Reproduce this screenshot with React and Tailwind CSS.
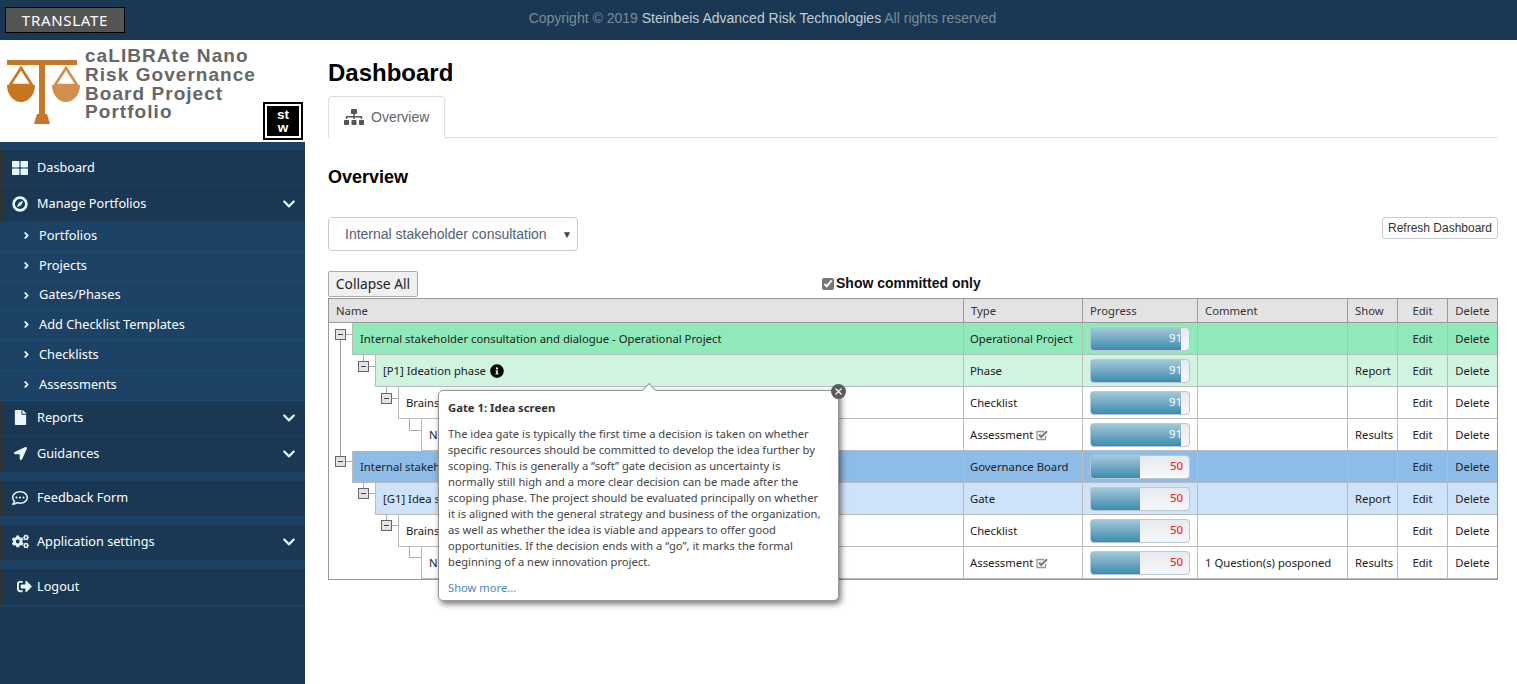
import React from "react";
import { FaThLarge, FaFile, FaLocationArrow, FaRegCommentDots, FaCogs, FaSignOutAlt, FaChevronDown, FaAngleRight, FaSitemap, FaInfoCircle } from "react-icons/fa";

const seg = "font-['Noto_Sans',sans-serif]";
const ari = "font-['Liberation_Sans',Arial,sans-serif]";

function Compass() {
  return (
    <svg width="16" height="16" viewBox="0 0 16 16">
      <circle cx="8" cy="8" r="6.4" fill="none" stroke="#e8f6ff" strokeWidth="2.6" />
      <path d="M11.200 4.800 L9.200 9.200 L4.800 11.200 L6.800 6.800 Z" fill="#e8f6ff" />
    </svg>
  );
}

function NavItem({ icon, label, chev, low }) {
  return (
    <div className={`h-[36px] bg-[#1a3853] border-l-[3px] border-l-[#2f3336] border-b border-b-[#1c4060] flex items-center text-white text-[12.7px] ${low ? "pt-[1px]" : "pb-[1px]"}`}>
      <span className="w-[34px] flex justify-center text-[#e8f6ff] shrink-0">{icon}</span>
      <span className="flex-1">{label}</span>
      <span className="contents">{chev && <FaChevronDown className="mr-[9px] text-[14px] text-[#eef8ff]" />}</span>
    </div>
  );
}

function SubItem({ label }) {
  return (
    <div className="h-[29.83px] border-b border-b-[#1d4a70] flex items-center pb-[2px] text-white text-[12.8px]">
      <FaAngleRight className="ml-[21px] mr-[7px] text-[11px]" />
      <span>{label}</span>
    </div>
  );
}

function Gap() {
  return <div className="h-[8px] bg-[#1c4163]" />;
}

function Sidebar() {
  return (
    <aside className={`w-[305px] shrink-0 bg-[#1a3853] h-[644px] ${seg}`}>
      <div className="h-[102px] bg-white flex relative">
        <svg width="82" height="100" viewBox="0 0 82 100" className="shrink-0">
          <rect x="7" y="20" width="70" height="5" fill="#c5782a" />
          <rect x="39" y="22" width="6" height="54" fill="#c5782a" />
          <path d="M34 84 L37 74 H47 L50 84 Z" fill="#c5782a" />
          <path d="M21 28 L10 45 H32 Z" fill="none" stroke="#c5761e" strokeWidth="2.6" />
          <path d="M7 45 H35 A14 17 0 0 1 7 45 Z" fill="#c5761e" />
          <path d="M66 28 L55 45 H77 Z" fill="none" stroke="#d08f4f" strokeWidth="2.6" />
          <path d="M52 45 H80 A14 17 0 0 1 52 45 Z" fill="#d08f4f" />
        </svg>
        <div className={`${ari} font-bold text-[19px] leading-[18.8px] tracking-[1.05px] text-[#666] mt-[7px] ml-[3px]`}>
          <div>caLIBRAte Nano</div>
          <div>Risk Governance</div>
          <div>Board Project</div>
          <div>Portfolio</div>
        </div>
        <div className="absolute left-[263px] top-[62px] w-[40px] h-[38px] border-2 border-black bg-white p-[2px]">
          <div className={`${ari} w-full h-full bg-black text-white font-bold text-[13.500px] leading-[13px] flex flex-col items-center justify-center`}>
            <span>st</span><span>w</span>
          </div>
        </div>
      </div>
      <div className="h-[8px] bg-[#1c4163]" />
      <NavItem low icon={<FaThLarge className="text-[16px]" />} label="Dasboard" />
      <NavItem low icon={<Compass />} label="Manage Portfolios" chev />
      <div className="bg-[#1c4266]">
        {["Portfolios", "Projects", "Gates/Phases", "Add Checklist Templates", "Checklists", "Assessments"].map((s) => (
          <SubItem key={s} label={s} />
        ))}
      </div>
      <NavItem icon={<FaFile className="text-[15px]" />} label="Reports" chev />
      <NavItem icon={<FaLocationArrow className="text-[13px]" />} label="Guidances" chev />
      <Gap />
      <NavItem icon={<FaRegCommentDots className="text-[16px]" />} label="Feedback Form" />
      <Gap />
      <NavItem icon={<FaCogs className="text-[17px]" />} label="Application settings" chev />
      <Gap />
      <div className="h-[36px] bg-[#1a3853] border-l-[3px] border-l-[#2f3336] flex items-center text-white text-[12.7px] pb-[1px]">
        <FaSignOutAlt className="ml-[14px] mr-[5px] text-[15px] text-[#e8f6ff]" />
        <span>Logout</span>
      </div>
      <div className="h-[2px] bg-[#1c4163]" />
    </aside>
  );
}

const rows = [
  { level: 0, name: "Internal stakeholder consultation and dialogue - Operational Project", type: "Operational Project", v: 91, bg: "bg-[#90e9b8]" },
  { level: 1, name: "[P1] Ideation phase", info: true, type: "Phase", v: 91, bg: "bg-[#cff5e0]", show: "Report" },
  { level: 2, name: "Brains", type: "Checklist", v: 91, bg: "bg-white" },
  { level: 3, name: "N", type: "Assessment", check: true, v: 91, bg: "bg-white", show: "Results" },
  { level: 0, name: "Internal stakeh", type: "Governance Board", v: 50, bg: "bg-[#8dbce8]" },
  { level: 1, name: "[G1] Idea s", type: "Gate", v: 50, bg: "bg-[#cfe3f8]", show: "Report" },
  { level: 2, name: "Brains", type: "Checklist", v: 50, bg: "bg-white" },
  { level: 3, name: "N", type: "Assessment", check: true, v: 50, bg: "bg-white", comment: "1 Question(s) posponed", show: "Results" },
];

const indent = ["w-[23px]", "w-[46px]", "w-[69px]", "w-[92px]"];

function Progress({ v }) {
  const ok = v > 60;
  return (
    <div className="relative h-[24px] w-[100px] rounded-[4px] border border-[#b9c6d8] bg-gradient-to-b from-[#e6e9ee] to-[#f7f8fa] overflow-hidden">
      <div className="absolute left-[-1px] top-[-1px] bottom-[-1px] rounded-l-[4px] border-l border-t border-b border-[#3d8db0] bg-gradient-to-b from-[#a2c8da] to-[#3a8bb0]" style={{ width: `${v}px` }} />
      <span className={`absolute top-[1px] text-[11.5px] leading-[18px] ${ok ? "text-white left-[78px]" : "text-[#f01010] left-[79px]"}`}>{v}</span>
    </div>
  );
}

function CheckIcon() {
  return (
    <svg width="12" height="11" viewBox="0 0 12 11" className="ml-[3px]">
      <path d="M9.500 6 V9.500 H1 V1.500 H8" fill="none" stroke="#999" strokeWidth="1.3" />
      <path d="M3 4.500 L5.200 7 L11 1.300" fill="none" stroke="#777" strokeWidth="1.9" />
    </svg>
  );
}

function Row({ r }) {
  const base = `${r.bg} border-b border-b-[#bbb] border-r border-r-[#bbb] flex items-center`;
  const cell = `${base} px-[6px] pt-[1px]`;
  return (
    <div className="grid grid-cols-[635px_119px_115px_150px_50px_50px_49px] h-[32px]">
      <div className="flex border-r border-r-[#bbb]">
        <div className={`${indent[r.level]} shrink-0 bg-white`} />
        <div className={`${r.bg} flex-1 flex items-center pl-[7px] pt-[1px] border-l border-l-[#bbb] border-b border-b-[#bbb] gap-[4px] overflow-hidden whitespace-nowrap`}>
          <span>{r.name}</span>
          {r.info && <FaInfoCircle className="text-[14px] text-black" />}
        </div>
      </div>
      <div className={cell}>
        <span>{r.type}</span>
        {r.check && <CheckIcon />}
      </div>
      <div className={`${base} pl-[7px]`}><Progress v={r.v} /></div>
      <div className={`${base} pl-[7px] pt-[1px]`}>{r.comment}</div>
      <div className={`${base} pl-[7px] pt-[1px]`}>{r.show}</div>
      <div className={`${cell} justify-center`}>Edit</div>
      <div className={`${cell} justify-center border-r-0`}>Delete</div>
    </div>
  );
}

function TreeBox({ x, y }) {
  return (
    <g>
      <rect x={x + 0.5} y={y + 0.5} width="10" height="10" fill="#e3e3e3" stroke="#666" />
      <line x1={x + 3} x2={x + 8} y1={y + 5.5} y2={y + 5.5} stroke="#444" />
    </g>
  );
}

function TreeLines() {
  const parts = [0, 127].map((o) => (
    <g key={o}>
      <line x1="17" x2="23" y1={o + 11.5} y2={o + 11.5} stroke="#aaa" />
      <line x1="34.500" x2="34.500" y1={o + 32} y2={o + 38} stroke="#aaa" />
      <line x1="40" x2="46" y1={o + 43.5} y2={o + 43.5} stroke="#aaa" />
      <line x1="57.500" x2="57.500" y1={o + 64} y2={o + 70} stroke="#aaa" />
      <line x1="63" x2="69" y1={o + 75.5} y2={o + 75.5} stroke="#aaa" />
      <path d={`M80.500 ${o + 96} V${o + 107.5} H92`} fill="none" stroke="#aaa" />
      <TreeBox x={29} y={o + 38} />
      <TreeBox x={52} y={o + 70} />
    </g>
  ));
  return (
    <svg width="100" height="256" viewBox="0 0 100 256" className="absolute left-0 top-0 pointer-events-none">
      <line x1="11.500" x2="11.500" y1="16" y2="133" stroke="#999" />
      {parts}
      <TreeBox x={6} y={6} />
      <TreeBox x={6} y={133} />
    </svg>
  );
}

function Popup() {
  const lines = [
    "The idea gate is typically the first time a decision is taken on whether",
    "specific resources should be committed to develop the idea further by",
    "scoping. This is generally a “soft” gate decision as uncertainty is",
    "normally still high and a more clear decision can be made after the",
    "scoping phase. The project should be evaluated principally on whether",
    "it is aligned with the general strategy and business of the organization,",
    "as well as whether the idea is viable and appears to offer good",
    "opportunities. If the decision ends with a “go”, it marks the formal",
    "beginning of a new innovation project.",
  ];
  return (
    <div className={`${seg} absolute left-[109px] top-[91px] w-[401px] h-[211px] bg-white border border-[#999] rounded-[5px] shadow-[2px_3px_6px_rgba(0,0,0,0.55)] px-[9px] pt-[9px] text-[#444]`}>
      <div className="absolute left-[205px] top-[-6px] w-[10px] h-[10px] bg-white border-l border-t border-[#999] rotate-45" />
      <div className="text-[11.300px] leading-[16px] font-bold text-[#333]">Gate 1: Idea screen</div>
      <div className="mt-[10px] text-[11.200px] leading-[16px] whitespace-nowrap">
        {lines.map((l) => <div key={l}>{l}</div>)}
      </div>
      <div className="mt-[10px] text-[11.200px] leading-[16px] text-[#428bca]">Show more...</div>
      <div className="absolute right-[-8px] top-[-7px] w-[15px] h-[15px] rounded-full bg-[#5c5c5c] flex items-center justify-center">
        <svg width="7" height="7" viewBox="0 0 7 7"><path d="M0.500 0.500 L6.500 6.500 M6.500 0.500 L0.500 6.500" stroke="#fff" strokeWidth="1.100" /></svg>
      </div>
    </div>
  );
}

function Table() {
  const th = "border-r border-r-[#999] flex items-center px-[7px] pt-[1px]";
  return (
    <div className={`${seg} relative w-[1170px] border border-[#999] text-[11.300px] text-[#222] mt-[1px]`}>
      <div className="grid grid-cols-[635px_119px_115px_150px_50px_50px_49px] h-[24px] bg-[#e3e3e3] border-b border-b-[#999] text-[#333]">
        <div className={th}>Name</div>
        <div className={th}>Type</div>
        <div className={th}>Progress</div>
        <div className={th}>Comment</div>
        <div className={th}>Show</div>
        <div className={`${th} justify-center`}>Edit</div>
        <div className={`${th} justify-center border-r-0`}>Delete</div>
      </div>
      <div className="relative">
        {rows.map((r, i) => <Row key={i} r={r} />)}
        <TreeLines />
      </div>
      <Popup />
    </div>
  );
}

export default function App() {
  return (
    <div className="w-[1517px] h-[684px] overflow-hidden bg-white">
      <header className={`${ari} h-[40px] bg-[#1a3853] relative flex items-center justify-center pb-[4px] text-[14px] text-[#7d8b99]`}>
        <button className={`${seg} absolute left-[5px] top-[7px] w-[120px] h-[26px] bg-[#555] border border-black text-white text-[15px] tracking-[0.7px] flex items-center justify-center`}>TRANSLATE</button>
        <span className="ml-[8px]">Copyright © 2019 <span className="text-[#c5ccd4]">Steinbeis Advanced Risk Technologies</span> All rights reserved</span>
      </header>
      <div className="flex">
        <Sidebar />
        <main className={`${ari} flex-1 pl-[23px] pr-[19px]`}>
          <h1 className="text-[24px] leading-[28px] font-bold text-black mt-[19px]">Dashboard</h1>
          <div className="mt-[9px] h-[42px] border-b border-b-[#ddd]">
            <div className="w-[117px] h-[42px] border border-[#ddd] border-b-white rounded-t-[4px] bg-white flex items-center pl-[15px] text-[14px] text-[#666] gap-[7px]">
              <FaSitemap className="text-[20px] text-[#555]" />
              <span>Overview</span>
            </div>
          </div>
          <h3 className="text-[18px] leading-[20px] font-bold text-black mt-[29px]">Overview</h3>
          <div className="flex justify-between items-start mt-[30px]">
            <div className="w-[250px] h-[34px] border border-[#ccc] rounded-[4px] flex items-center justify-between pl-[16px] pr-[5px] text-[14px] text-[#555f70]">
              <span>Internal stakeholder consultation</span>
              <span className="text-[10px] text-[#444]">▼</span>
            </div>
            <button className="w-[116px] h-[22px] border border-[#ccc] rounded-[3px] text-[12px] text-[#333] flex items-center justify-center">Refresh Dashboard</button>
          </div>
          <div className="flex items-center h-[26px] mt-[20px] relative">
            <button className={`${seg} w-[90px] h-[26px] bg-[#f0f0f0] border border-[#aaa] rounded-[2px] text-[13.800px] leading-[22px] pb-[1px] text-[#222]`}>Collapse All</button>
            <div className="absolute left-[494px] top-[2px] flex items-center gap-[2px] text-[14px] font-bold text-[#111]">
              <input type="checkbox" checked readOnly className="w-[12px] h-[12px] accent-[#777]" />
              <span>Show committed only</span>
            </div>
          </div>
          <Table />
        </main>
      </div>
    </div>
  );
}
